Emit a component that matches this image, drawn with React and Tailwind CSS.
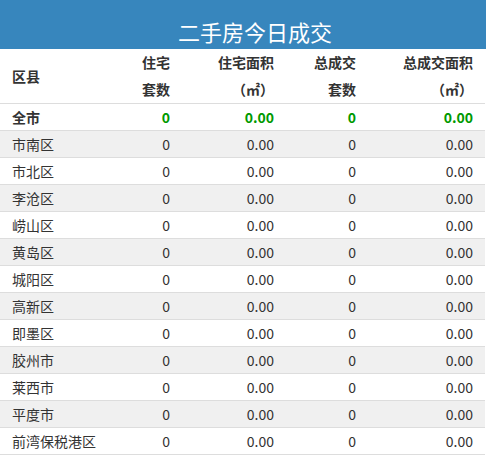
const rows = [
  '市南区',
  '市北区',
  '李沧区',
  '崂山区',
  '黄岛区',
  '城阳区',
  '高新区',
  '即墨区',
  '胶州市',
  '莱西市',
  '平度市',
  '前湾保税港区',
];

const cell = 'h-[27px] pr-3 text-right align-middle';

export default function App() {
  return (
    <main
      className="w-[489px] bg-white text-[14px] text-[#333]"
      style={{ fontFamily: '"Microsoft YaHei", "Noto Sans CJK SC", sans-serif' }}
    >
      <div className="w-[486px]">
        <h1 className="h-[49px] bg-[#3786bd] pl-[24px] pt-[13px] text-center text-[22px] leading-[36px] font-normal text-white">
          二手房今日成交
        </h1>

        <table className="w-[485px] table-fixed border-collapse">
          <colgroup>
            <col className="w-[110px]" />
            <col className="w-[72px]" />
            <col className="w-[104px]" />
            <col className="w-[82px]" />
            <col className="w-[117px]" />
          </colgroup>
          <thead>
            <tr className="border-b border-[#ddd] font-bold leading-[27px]">
              <th className="h-[53px] pl-3 text-left align-middle">区县</th>
              <th className="pr-3 text-right align-middle">
                住宅
                <br />
                套数
              </th>
              <th className="pr-3 text-right align-middle">
                住宅面积
                <br />
                （㎡）
              </th>
              <th className="pr-3 text-right align-middle">
                总成交
                <br />
                套数
              </th>
              <th className="pr-3 text-right align-middle">
                总成交面积
                <br />
                （㎡）
              </th>
            </tr>
          </thead>
          <tbody>
            <tr className="border-b border-[#ddd] font-bold">
              <td className="h-[27px] pl-3 align-middle">全市</td>
              <td className={`${cell} text-[#090]`}>0</td>
              <td className={`${cell} text-[#090]`}>0.00</td>
              <td className={`${cell} text-[#090]`}>0</td>
              <td className={`${cell} text-[#090]`}>0.00</td>
            </tr>
            {rows.map((name, i) => (
              <tr
                key={name}
                className={`border-b border-[#ddd] ${i % 2 === 0 ? 'bg-[#f0f0f0]' : 'bg-white'}`}
              >
                <td className="h-[27px] pl-3 align-middle">{name}</td>
                <td className={cell}>0</td>
                <td className={cell}>0.00</td>
                <td className={cell}>0</td>
                <td className={cell}>0.00</td>
              </tr>
            ))}
          </tbody>
        </table>
      </div>
    </main>
  );
}
